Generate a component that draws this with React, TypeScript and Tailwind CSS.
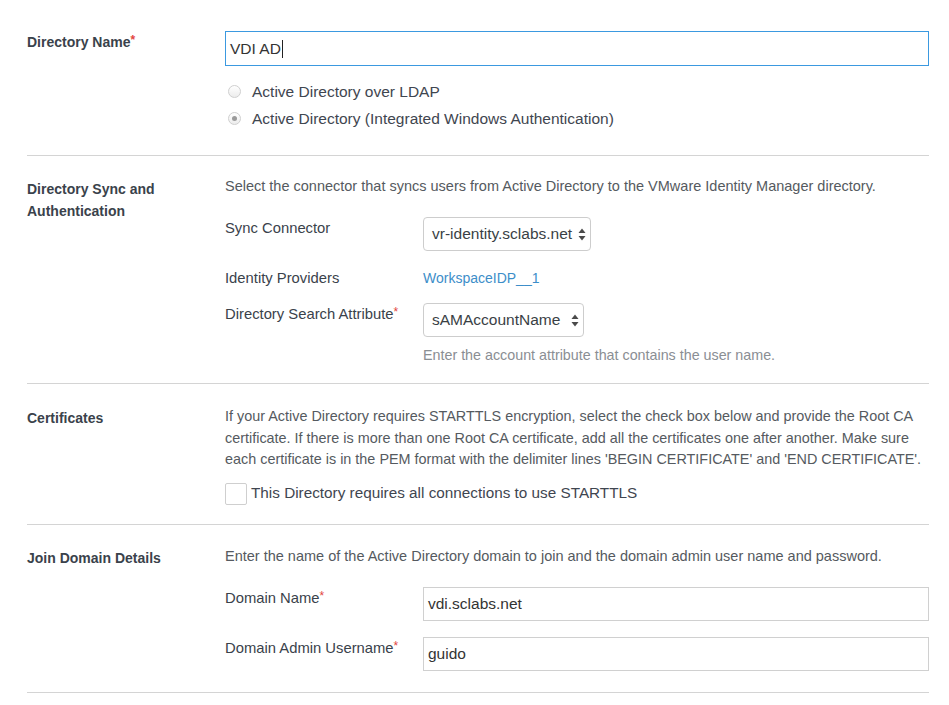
import React from "react";

const Req = () => <span className="text-[#e2463e] text-[12px] align-top relative top-[-2px]">*</span>;

function Radio({ checked, label }: { checked?: boolean; label: string }) {
  return (
    <div className="flex items-center h-[27px]">
      <div className="w-[13px] h-[13px] ml-[3px] rounded-full border border-[#cfcfcf] bg-gradient-to-b from-[#ffffff] to-[#ececec] flex items-center justify-center">
        {checked && <div className="w-[5px] h-[5px] rounded-full bg-[#9a9a9a]" />}
      </div>
      <span className="ml-[11px] text-[15.5px] text-[#3f4650]">{label}</span>
    </div>
  );
}

function SelectBox({ value, width }: { value: string; width: string }) {
  return (
    <div className={`${width} h-[34px] rounded-[4px] border border-[#cdcdcd] bg-white flex items-center pl-[8px] pr-[4px] text-[15.5px] text-[#3a3f45]`}>
      <span className="flex-1 whitespace-nowrap">{value}</span>
      <svg width="8" height="13" viewBox="0 0 8 13">
        <path d="M4 0.5 L7.5 5 L0.5 5 Z" fill="#4a4a4a" />
        <path d="M4 12.5 L7.5 8 L0.5 8 Z" fill="#4a4a4a" />
      </svg>
    </div>
  );
}

export default function App() {
  return (
    <div className="w-[949px] h-[705px] bg-white pl-[27px] pr-[20px] text-[14px] text-[#3a424b]" style={{ fontFamily: '"Helvetica Neue", "Liberation Sans", Arial, sans-serif' }}>
      {/* Section 1 */}
      <div className="flex pt-[31px] pb-[23px] border-b border-[#d4d4d4]">
        <div className="w-[198px] shrink-0 font-bold leading-5 pt-[1px]">Directory Name<Req /></div>
        <div className="flex-1">
          <div className="h-[35px] border border-[#3b99e0] flex items-center pl-[4px] text-[15.5px] text-[#333]">
            VDI AD<span className="w-px h-[18px] bg-[#222] ml-[1px]" />
          </div>
          <div className="mt-[12px]">
            <Radio label="Active Directory over LDAP" />
            <Radio checked label="Active Directory (Integrated Windows Authentication)" />
          </div>
        </div>
      </div>

      {/* Section 2 */}
      <div className="flex pt-[20px] pb-[18px] border-b border-[#d4d4d4]">
        <div className="w-[198px] shrink-0 font-bold leading-[22px] pt-[2px]">Directory Sync and<br />Authentication</div>
        <div className="flex-1">
          <div className="leading-5 text-[14.5px] text-[#555a60]">Select the connector that syncs users from Active Directory to the VMware Identity Manager directory.</div>
          <div className="flex mt-[21px]">
            <div className="w-[198px] shrink-0 leading-5 pt-[1px] text-[14.8px]">Sync Connector</div>
            <SelectBox value="vr-identity.sclabs.net" width="w-[168px]" />
          </div>
          <div className="flex mt-[17px] leading-5">
            <div className="w-[198px] shrink-0 text-[14.8px]">Identity Providers</div>
            <span className="text-[#3d8ec9]">WorkspaceIDP__1</span>
          </div>
          <div className="flex mt-[15px]">
            <div className="w-[198px] shrink-0 leading-5 pt-[1px] text-[14.8px]">Directory Search Attribute<Req /></div>
            <SelectBox value="sAMAccountName" width="w-[161px]" />
          </div>
          <div className="ml-[198px] mt-[8px] leading-5 text-[14.3px] text-[#8a8e93]">Enter the account attribute that contains the user name.</div>
        </div>
      </div>

      {/* Section 3 */}
      <div className="flex pt-[22px] pb-[19px] border-b border-[#d4d4d4]">
        <div className="w-[198px] shrink-0 font-bold leading-[22px] pt-[1px]">Certificates</div>
        <div className="flex-1">
          <div className="leading-[21.7px] text-[14.4px] text-[#555a60] whitespace-nowrap">
            If your Active Directory requires STARTTLS encryption, select the check box below and provide the Root CA<br />
            certificate. If there is more than one Root CA certificate, add all the certificates one after another. Make sure<br />
            each certificate is in the PEM format with the delimiter lines 'BEGIN CERTIFICATE' and 'END CERTIFICATE'.
          </div>
          <div className="flex items-center mt-[11px]">
            <div className="w-[22px] h-[22px] rounded-[2px] border border-[#cfcfcf] bg-white" />
            <span className="ml-[4px] text-[15.3px] text-[#3f4650]">This Directory requires all connections to use STARTTLS</span>
          </div>
        </div>
      </div>

      {/* Section 4 */}
      <div className="flex pt-[21px] pb-[21px] border-b border-[#d4d4d4]">
        <div className="w-[198px] shrink-0 font-bold leading-[22px] pt-[1px]">Join Domain Details</div>
        <div className="flex-1">
          <div className="leading-5 text-[14.5px] text-[#555a60]">Enter the name of the Active Directory domain to join and the domain admin user name and password.</div>
          <div className="flex mt-[21px]">
            <div className="w-[198px] shrink-0 leading-5 pt-[1px] text-[14.8px]">Domain Name<Req /></div>
            <div className="flex-1 h-[34px] border border-[#d0d0d0] flex items-center pl-[4px] text-[15.5px] text-[#333]">vdi.sclabs.net</div>
          </div>
          <div className="flex mt-[16px]">
            <div className="w-[198px] shrink-0 leading-5 pt-[1px] text-[14.8px]">Domain Admin Username<Req /></div>
            <div className="flex-1 h-[34px] border border-[#d0d0d0] flex items-center pl-[4px] text-[15.5px] text-[#333]">guido</div>
          </div>
        </div>
      </div>
    </div>
  );
}
